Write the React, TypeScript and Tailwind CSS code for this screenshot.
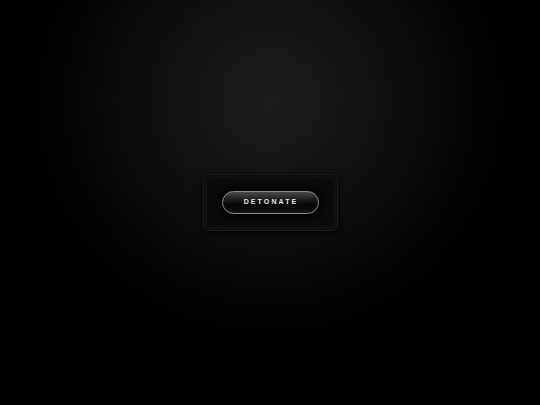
export default function App() {
  return (
    <div className="w-[540px] h-[405px] flex items-center justify-center bg-[radial-gradient(circle_245px_at_50%_100px,#1d1d1d_0%,#151515_30%,#0b0b0b_60%,#030303_85%,#000_100%)]">
      <div className="w-[135px] h-[57px] rounded-[5px] border border-[#1b1b1b] bg-[#0c0c0c] p-[2px] shadow-[0_2px_6px_rgba(0,0,0,0.9)]">
        <div className="w-full h-full rounded-[4px] border border-[#141414] bg-[#0a0a0a] flex items-center justify-center">
          <button className="w-[97px] h-[23px] rounded-full border border-[#8a8a8a] bg-[linear-gradient(to_bottom,#4a4a4a_0%,#1e1e1e_35%,#050505_60%,#0d0d0d_85%,#1a1a1a_100%)] shadow-[0_0_8px_4px_rgba(0,0,0,0.85)] flex items-center justify-center pl-[2px]">
            <span className="font-['Liberation_Sans',Arial,sans-serif] font-bold text-[7px] tracking-[0.3em] text-[#e6e6e6] [text-shadow:0_1px_1px_rgba(0,0,0,0.8)]">
              DETONATE
            </span>
          </button>
        </div>
      </div>
    </div>
  );
}
